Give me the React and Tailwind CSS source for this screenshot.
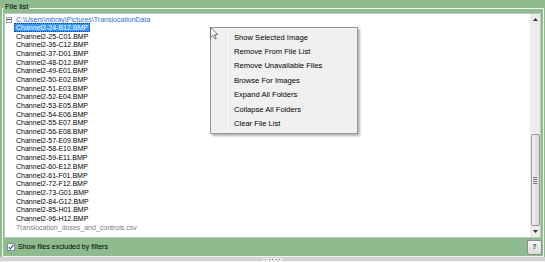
import React from "react";

const files = [
  "Channel2-24-B12.BMP",
  "Channel2-25-C01.BMP",
  "Channel2-36-C12.BMP",
  "Channel2-37-D01.BMP",
  "Channel2-48-D12.BMP",
  "Channel2-49-E01.BMP",
  "Channel2-50-E02.BMP",
  "Channel2-51-E03.BMP",
  "Channel2-52-E04.BMP",
  "Channel2-53-E05.BMP",
  "Channel2-54-E06.BMP",
  "Channel2-55-E07.BMP",
  "Channel2-56-E08.BMP",
  "Channel2-57-E09.BMP",
  "Channel2-58-E10.BMP",
  "Channel2-59-E11.BMP",
  "Channel2-60-E12.BMP",
  "Channel2-61-F01.BMP",
  "Channel2-72-F12.BMP",
  "Channel2-73-G01.BMP",
  "Channel2-84-G12.BMP",
  "Channel2-85-H01.BMP",
  "Channel2-96-H12.BMP",
];

const menuItems = [
  "Show Selected Image",
  "Remove From File List",
  "Remove Unavailable Files",
  "Browse For Images",
  "Expand All Folders",
  "Collapse All Folders",
  "Clear File List",
];

const Scrollbar = () => (
  <div className="w-[10px] h-full bg-[#ececec] flex flex-col items-center">
    <div className="h-[10px] w-full flex items-center justify-center">
      <svg width="5" height="3" viewBox="0 0 5 3">
        <path d="M0 3 L2.5 0 L5 3 Z" fill="#333" />
      </svg>
    </div>
    <div className="flex-1" />
    <div className="w-[9px] h-[92px] rounded-[2px] border border-[#9a9a9a] bg-gradient-to-r from-[#f2f2f2] to-[#d6d6d6] flex flex-col items-center justify-center gap-[1px]">
      <div className="w-[4px] h-[1px] bg-[#7a7a7a]" />
      <div className="w-[4px] h-[1px] bg-[#7a7a7a]" />
      <div className="w-[4px] h-[1px] bg-[#7a7a7a]" />
      <div className="w-[4px] h-[1px] bg-[#7a7a7a]" />
    </div>
    <div className="h-[11px] w-full flex items-center justify-center">
      <svg width="5" height="3" viewBox="0 0 5 3">
        <path d="M0 0 L5 0 L2.5 3 Z" fill="#333" />
      </svg>
    </div>
  </div>
);

export default function App() {
  return (
    <div
      className="relative w-[545px] h-[262px] overflow-hidden bg-[#8fbc8f] text-[7px] text-black"
      style={{ fontFamily: '"Liberation Sans", Arial, sans-serif' }}
    >
      <div className="relative mt-[8px] ml-[2px] w-[542px] h-[249px] border border-[#eef4ee] flex flex-col">
        <span className="absolute -top-[7px] left-[1px] px-[1px] bg-[#8fbc8f] text-black text-[7.5px] leading-[10px]">
          File list
        </span>

        <div className="ml-[1px] mt-[4px] w-[537px] h-[225px] border border-[#c4c4c4] bg-white flex">
          <div className="flex-1 flex flex-col pt-[1.5px]">
            <div className="h-[8px] flex items-center">
              <div className="ml-[1px] w-[6px] h-[6px] border border-[#9a9a9a] flex items-center justify-center">
                <div className="w-[4px] h-[1px] bg-[#444]" />
              </div>
              <span className="ml-[4px] text-[#2f6fd0] leading-[8px]">
                C:\Users\mbray\Pictures\TranslocationData
              </span>
            </div>
            {files.map((f, i) => (
              <div key={f} className="h-[8.7px] flex items-center pl-[9px]">
                {i === 0 ? (
                  <span className="inline-block bg-[#3399ff] text-white px-[1px] leading-[7px] border border-dotted border-[#0a3d8f]">
                    {f}
                  </span>
                ) : (
                  <span className="px-[2px] leading-[8px]">{f}</span>
                )}
              </div>
            ))}
            <div className="h-[8.7px] flex items-center pl-[9px]">
              <span className="px-[2px] leading-[8px] text-[#7d7d7d]">
                Translocation_doses_and_controls.csv
              </span>
            </div>
          </div>
          <Scrollbar />
        </div>

        <div className="flex-1 flex items-center justify-between pl-[4px] pr-[1px]">
          <div className="flex items-center gap-[3px]">
            <div className="w-[8px] h-[8px] bg-white border border-[#8a8a8a] flex items-center justify-center">
              <svg width="6" height="6" viewBox="0 0 6 6">
                <path d="M0.8 3.2 L2.4 4.8 L5.4 0.8" stroke="#2a4fb0" strokeWidth="1.2" fill="none" />
              </svg>
            </div>
            <span className="text-black">Show files excluded by filters</span>
          </div>
          <div className="w-[15px] h-[15px] border border-[#8c8c8c] rounded-[2px] bg-gradient-to-b from-[#f6f6f6] to-[#dcdcdc] flex items-center justify-center text-[7px] font-bold text-[#2a3a80]">
            ?
          </div>
        </div>
      </div>

      <div className="h-[5px] bg-[#d4d4d4] border-b border-[#eeeeee] flex items-center justify-center">
        <div className="w-[20px] h-[3px] bg-[#e8e8e8] flex items-center justify-evenly">
          <div className="w-[1px] h-[1px] bg-[#777]" />
          <div className="w-[1px] h-[1px] bg-[#777]" />
          <div className="w-[1px] h-[1px] bg-[#777]" />
          <div className="w-[1px] h-[1px] bg-[#777]" />
          <div className="w-[1px] h-[1px] bg-[#777]" />
        </div>
      </div>

      <div className="absolute left-[210px] top-[27px] w-[148px] h-[107px] bg-[#f0f0f0] border border-[#979797] shadow-[2px_2px_2px_rgba(0,0,0,0.3)] flex py-[2px]">
        <div className="w-[16px] border-r border-[#e2e3e3]" />
        <div className="w-[1px] bg-white" />
        <div className="flex-1 flex flex-col pl-[6px]">
          {menuItems.map((m) => (
            <div key={m} className="h-[14.67px] flex items-center text-[7.6px] text-black">
              {m}
            </div>
          ))}
        </div>
      </div>

      <svg className="absolute left-[210px] top-[27px]" width="9" height="13" viewBox="0 0 9 13">
        <path d="M0.5 0.5 L0.5 10.5 L3 8.2 L4.8 12 L6.3 11.3 L4.6 7.6 L8 7.6 Z" fill="white" stroke="#555" strokeWidth="0.8" />
      </svg>
    </div>
  );
}
